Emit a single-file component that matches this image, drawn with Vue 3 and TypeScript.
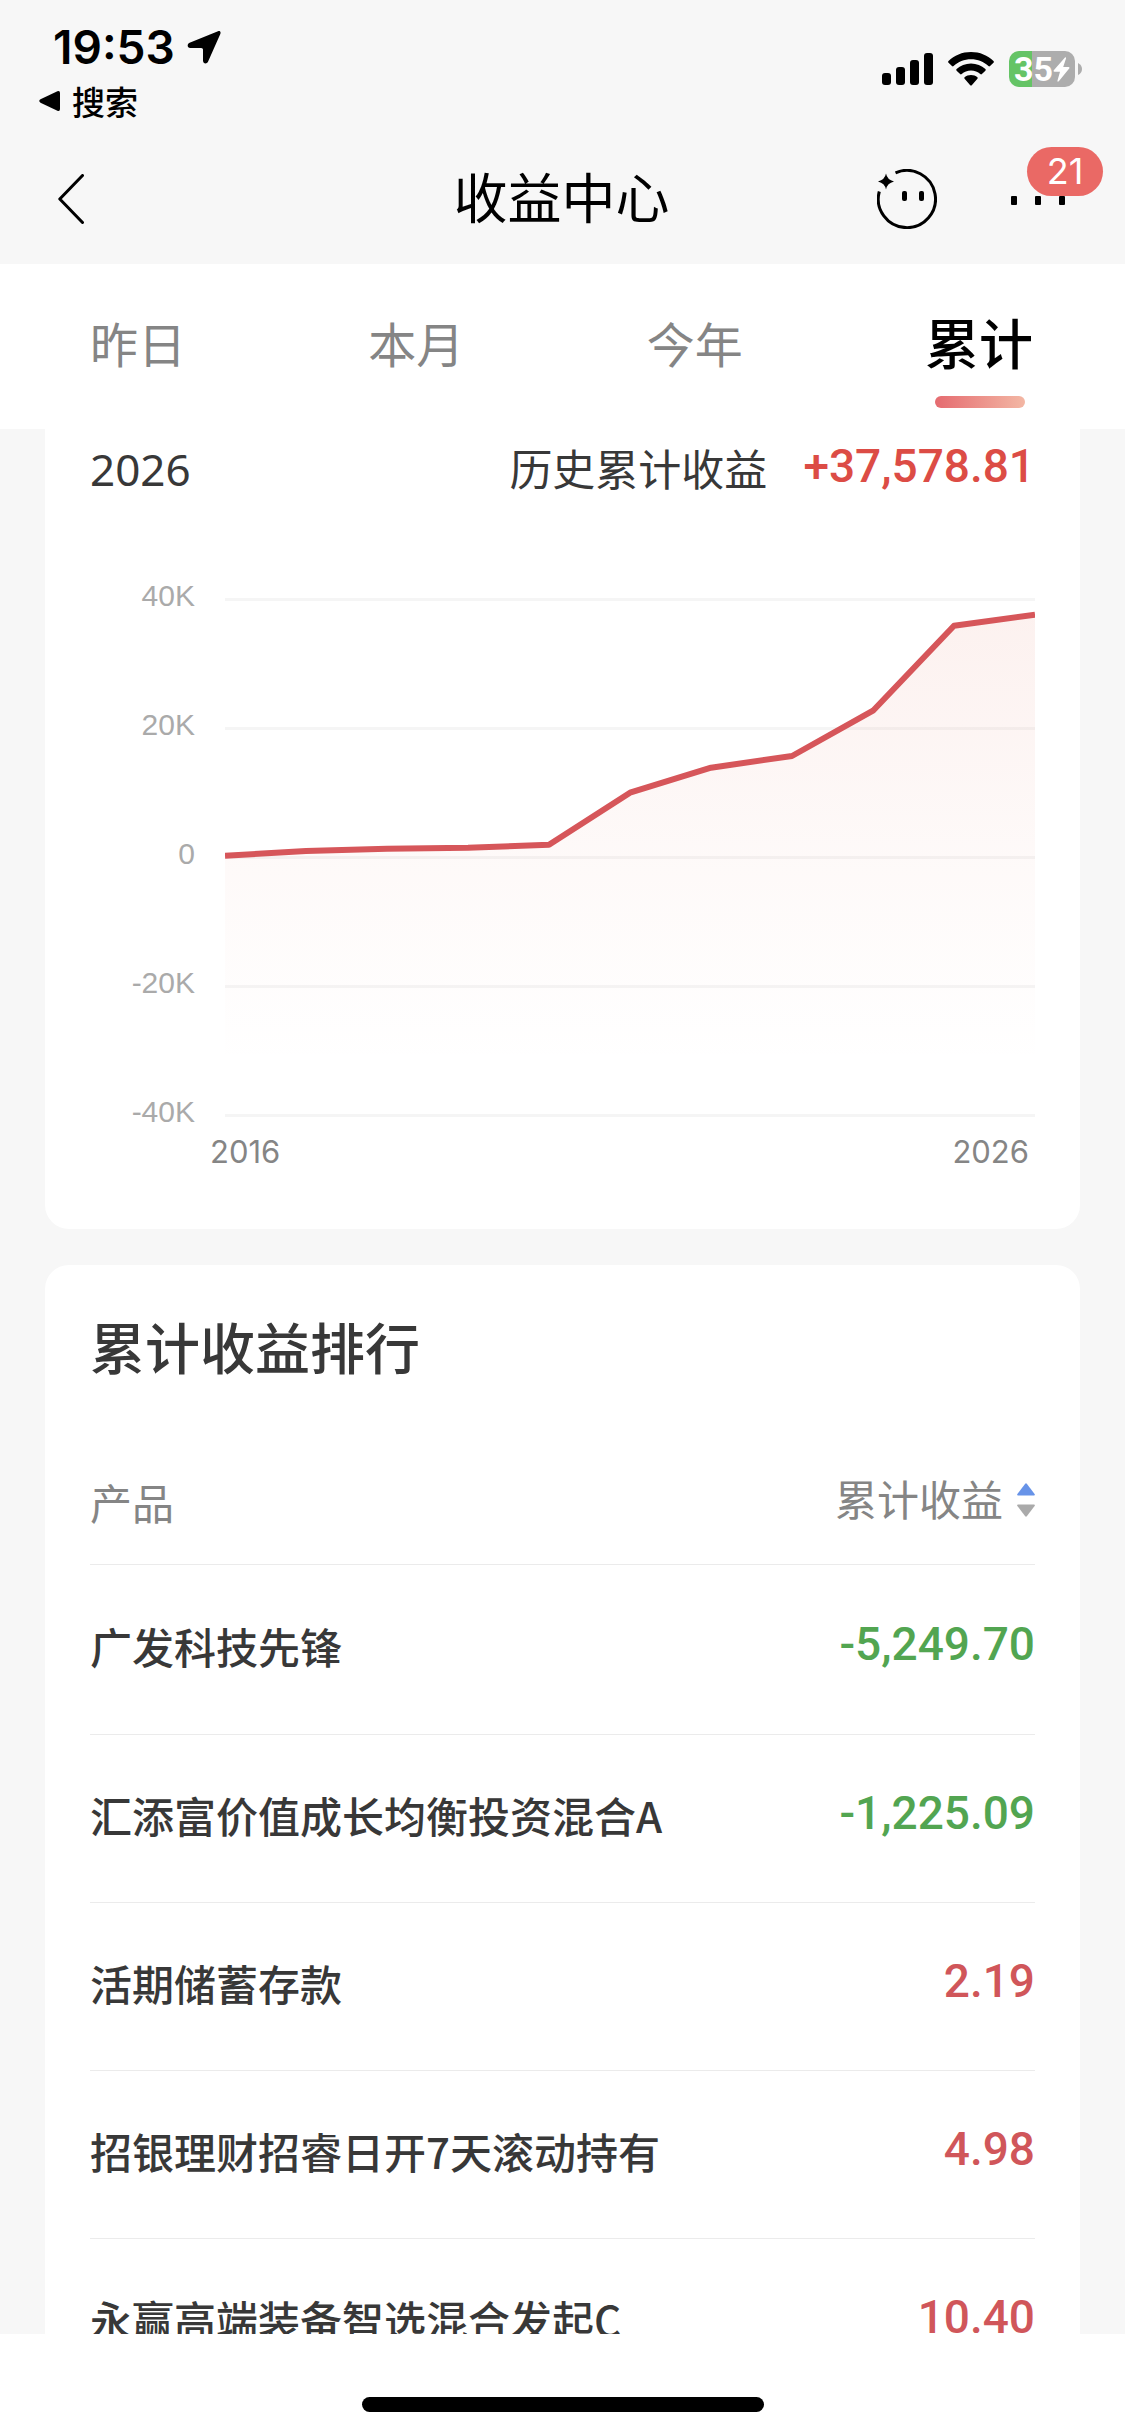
<script setup lang="ts">
import { computed, ref } from 'vue'

interface Product {
  name: string
  earnings: number
}

const tabs = ['昨日', '本月', '今年', '累计']
const activeTab = ref('累计')

const total = 37578.81
const history = [200, 930, 1290, 1440, 1900, 9970, 13840, 15660, 22680, 35860, total]
const axisLabels = ['40K', '20K', '0', '-20K', '-40K']

const products: Product[] = [
  { name: '广发科技先锋', earnings: -5249.7 },
  { name: '汇添富价值成长均衡投资混合A', earnings: -1225.09 },
  { name: '活期储蓄存款', earnings: 2.19 },
  { name: '招银理财招睿日开7天滚动持有', earnings: 4.98 },
  { name: '永赢高端装备智选混合发起C', earnings: 10.4 },
]

const ascending = ref(true)
const ranked = computed(() =>
  [...products].sort((a, b) => (ascending.value ? a.earnings - b.earnings : b.earnings - a.earnings)),
)

// Plot area: 810 x 519 units, 129 units for each 20K step, zero on the middle grid line.
const gridY = [0, 1, 2, 3, 4].map((i) => i * 129 + 1.5)
const points = history.map((v, i) => `${i * 81},${(259 - (v / 20000) * 129).toFixed(1)}`)
const linePath = 'M' + points.join(' L')
const areaPath = linePath + ' L810,517 L0,517 Z'

function money(value: number): string {
  return value.toLocaleString('en-US', { minimumFractionDigits: 2, maximumFractionDigits: 2 })
}
</script>

<template>
  <div class="screen" lang="zh-CN">
    <header class="top">
      <div class="status">
        <div class="status-left">
          <div class="clock">
            <span>19:53</span>
            <svg class="location" viewBox="0 0 34 34" aria-hidden="true">
              <path d="M31 1.200L2.600 12.800C-.300 14 .200 18 3.200 18H14.200C15.300 18 16 18.700 16 19.800V30.500C16 33.800 19.600 34.500 21 31.800L33.200 4.200C34.200 2 33 .400 31 1.200Z" />
            </svg>
          </div>
          <a class="return" href="#">
            <svg viewBox="0 0 22 22" aria-hidden="true"><path d="M1.500 9.300L18.400 1.200Q21 .200 21 3V19Q21 21.800 18.400 20.800L1.500 12.700Q-1 11 1.500 9.300Z" /></svg>
            <span>搜索</span>
          </a>
        </div>
        <div class="status-right">
          <svg class="signal" viewBox="0 0 51 32" aria-hidden="true">
            <rect x="0" y="20" width="9" height="12" rx="3" />
            <rect x="14" y="14" width="9" height="18" rx="3" />
            <rect x="28" y="7" width="9" height="25" rx="3" />
            <rect x="42" y="0" width="9" height="32" rx="3" />
          </svg>
          <svg class="wifi" viewBox="0 0 46 34" aria-hidden="true">
            <path d="M23 0C14.200 0 6.200 3.400 .500 8.900Q-.300 9.800 .500 10.700L4 14.100Q4.800 14.800 5.600 14.100C10.100 9.800 16.300 7.200 23 7.200S35.900 9.800 40.400 14.100Q41.200 14.800 42 14.100L45.500 10.700Q46.300 9.800 45.500 8.900C39.800 3.400 31.800 0 23 0Z" />
            <path d="M23 11.500C17.400 11.500 12.400 13.600 8.600 17.100Q7.800 17.900 8.600 18.700L12.100 22.100Q12.900 22.800 13.700 22.100C16.200 19.900 19.400 18.600 23 18.600S29.800 19.900 32.300 22.100Q33.100 22.800 33.900 22.100L37.400 18.700Q38.200 17.900 37.400 17.100C33.600 13.600 28.600 11.500 23 11.500Z" />
            <path d="M23 23C20.500 23 18.300 23.800 16.600 25.200Q15.800 26 16.600 26.800L22 32.900Q23 34 24 32.900L29.400 26.800Q30.200 26 29.400 25.200C27.700 23.800 25.500 23 23 23Z" />
          </svg>
          <div class="battery">
            <div class="battery-body">
              <span>35</span>
              <svg viewBox="0 0 17 25" aria-hidden="true"><path d="M12 .600L.800 13.200Q0 14.600 1.500 14.800H7L4.500 23.600Q4.300 25.400 5.800 24.200L16.200 11.600Q17 10.200 15.500 10H10.200L13 1.500Q13.200 -.500 12 .600Z" /></svg>
            </div>
            <svg class="battery-cap" viewBox="0 0 4 12" aria-hidden="true"><path d="M0 0Q4 2 4 6T0 12Z" /></svg>
          </div>
        </div>
      </div>
      <nav class="navbar">
        <button class="back" type="button" aria-label="返回">
          <svg viewBox="0 0 26 50" aria-hidden="true"><path d="M24.500 1.500L1.800 25L24.500 48.500" /></svg>
        </button>
        <h1>收益中心</h1>
        <div class="actions">
          <button class="assistant" type="button" aria-label="助手">
            <svg viewBox="0 0 60 60" aria-hidden="true">
              <path class="ring" d="M18.500 3.800A28.600 28.600 0 1 1 2.300 22.500" />
              <path d="M9 4.500Q10.200 10.800 17 12.500Q10.200 14.200 9 20.500Q7.800 14.200 1 12.500Q7.800 10.800 9 4.500Z" />
              <rect x="25" y="22" width="5" height="10" rx="2" />
              <rect x="42" y="22" width="5" height="10" rx="2" />
            </svg>
          </button>
          <button class="more" type="button" aria-label="更多">
            <svg viewBox="0 0 54 9" aria-hidden="true">
              <rect width="6" height="9" rx="1" />
              <rect x="24" width="6" height="9" rx="1" />
              <rect x="48" width="6" height="9" rx="1" />
            </svg>
            <span class="badge">21</span>
          </button>
        </div>
      </nav>
    </header>

    <div class="tabs" role="tablist">
      <button
        v-for="tab in tabs"
        :key="tab"
        type="button"
        role="tab"
        :aria-selected="tab === activeTab"
        :class="['tab', { active: tab === activeTab }]"
        @click="activeTab = tab"
      >
        {{ tab }}
      </button>
    </div>

    <main class="content">
      <section class="card trend">
        <div class="summary">
          <span class="year">2026</span>
          <span class="label">历史累计收益</span>
          <strong class="amount total">+{{ money(total) }}</strong>
        </div>
        <div class="chart">
          <div class="axis-y">
            <span v-for="label in axisLabels" :key="label">{{ label }}</span>
          </div>
          <svg class="plot" viewBox="0 0 810 519" preserveAspectRatio="none" role="img" aria-label="历史累计收益">
            <defs>
              <linearGradient id="area-fill" x1="0" y1="0" x2="0" y2="1">
                <stop offset="0" stop-color="#e0664f" stop-opacity="0.09" />
                <stop offset="0.5" stop-color="#e0664f" stop-opacity="0.035" />
                <stop offset="0.9" stop-color="#e0664f" stop-opacity="0" />
              </linearGradient>
            </defs>
            <line v-for="y in gridY" :key="y" class="grid" x1="0" x2="810" :y1="y" :y2="y" />
            <path :d="areaPath" fill="url(#area-fill)" />
            <path class="line" :d="linePath" />
          </svg>
        </div>
        <div class="axis-x"><span>2016</span><span>2026</span></div>
      </section>

      <section class="card ranking">
        <h2>累计收益排行</h2>
        <table>
          <thead>
            <tr>
              <th scope="col">产品</th>
              <th scope="col" class="right">
                <button class="sort" type="button" @click="ascending = !ascending">
                  <span>累计收益</span>
                  <svg viewBox="0 0 18 34" aria-hidden="true">
                    <path :class="{ on: ascending }" d="M8 .900Q9 -.300 10 .900L17.600 11Q18.300 12.500 17 12.500H1Q-.300 12.500 .400 11Z" />
                    <path :class="{ on: !ascending }" d="M8 33.100Q9 34.300 10 33.100L17.600 23Q18.300 21.500 17 21.500H1Q-.300 21.500 .400 23Z" />
                  </svg>
                </button>
              </th>
            </tr>
          </thead>
          <tbody>
            <tr v-for="item in ranked" :key="item.name">
              <td class="name">{{ item.name }}</td>
              <td :class="['amount', 'right', item.earnings < 0 ? 'loss' : 'gain']">{{ money(item.earnings) }}</td>
            </tr>
          </tbody>
        </table>
      </section>
    </main>

    <footer class="bottom"><div class="home-indicator"></div></footer>
  </div>
</template>

<style>
body {
  margin: 0;
  background: #fff;
}
</style>

<style scoped>
.screen {
  display: flex;
  flex-direction: column;
  height: 100vh;
  background: #f7f7f7;
  color: #383838;
  font-family: "Noto Sans CJK SC", "Noto Sans", sans-serif;
  font-size: 42px;
}

button {
  padding: 0;
  border: 0;
  background: none;
  color: inherit;
  font: inherit;
  cursor: pointer;
}

svg {
  display: block;
  flex: none;
}

.top {
  flex: none;
  color: #000;
}

.status {
  display: flex;
  justify-content: space-between;
  height: 130px;
  box-sizing: border-box;
  padding: 20px 43px 0 39px;
}

.clock {
  display: flex;
  align-items: center;
  gap: 12px;
  padding-left: 14px;
  font: 600 46px/54px Inter, sans-serif;
}

.location {
  width: 34px;
  height: 34px;
}

.return {
  display: flex;
  align-items: center;
  gap: 11px;
  color: inherit;
  font-size: 33px;
  font-weight: 500;
  line-height: 54px;
  text-decoration: none;
}

.return svg {
  width: 22px;
  height: 22px;
}

.status-right {
  display: flex;
  align-items: center;
  height: 98px;
}

.signal {
  width: 51px;
  height: 32px;
}

.wifi {
  width: 46px;
  height: 34px;
  margin: 0 15px;
}

.battery {
  display: flex;
  align-items: center;
  gap: 3px;
}

.battery-body {
  display: flex;
  align-items: center;
  justify-content: center;
  width: 66px;
  height: 36px;
  border-radius: 10px;
  background: linear-gradient(90deg, #65c466 35%, #adadad 35%);
  color: #fff;
  font: 700 34px/36px Roboto, sans-serif;
}

.battery-body svg {
  width: 17px;
  height: 25px;
  fill: #fff;
}

.battery-cap {
  width: 4px;
  height: 12px;
  fill: #adadad;
}

.navbar {
  display: grid;
  grid-template-columns: 1fr auto 1fr;
  align-items: center;
  height: 134px;
  box-sizing: border-box;
  padding: 3px 60px 0 58px;
}

.back {
  justify-self: start;
}

.back svg {
  width: 26px;
  height: 50px;
  fill: none;
  stroke: #000;
  stroke-width: 3;
  stroke-linecap: round;
  stroke-linejoin: round;
}

h1 {
  margin: 0;
  padding-bottom: 6px;
  font-size: 54px;
  font-weight: 400;
  line-height: 80px;
}

.actions {
  display: flex;
  align-items: center;
  justify-self: end;
  gap: 74px;
}

.assistant svg {
  width: 60px;
  height: 60px;
}

.ring {
  fill: none;
  stroke: #000;
  stroke-width: 3;
}

.more {
  position: relative;
  padding: 20px 0 16px;
}

.more svg {
  width: 54px;
  height: 9px;
}

.badge {
  position: absolute;
  top: -29px;
  right: -38px;
  width: 76px;
  border-radius: 25px;
  background: #ea6965;
  color: #fff;
  font: 400 36px/49px Inter, sans-serif;
}

.tabs {
  display: flex;
  flex: none;
  justify-content: space-between;
  height: 165px;
  padding: 0 92px 0 90px;
  background: #fff;
}

.tab {
  position: relative;
  padding-bottom: 10px;
  color: #858585;
  font-size: 48px;
}

.tab.active {
  color: #000;
  font-size: 54px;
  font-weight: 500;
}

.tab.active::after {
  position: absolute;
  bottom: 21px;
  left: 50%;
  width: 90px;
  height: 12px;
  margin-left: -44px;
  border-radius: 6px;
  background: linear-gradient(90deg, #e56b70, #f3b7a4);
  content: "";
}

.content {
  flex: 1 1 0;
  min-height: 0;
  overflow: hidden;
  padding: 0 45px;
}

.card {
  padding: 0 45px;
  border-radius: 24px;
  background: #fff;
}

.trend {
  padding-bottom: 59px;
  border-top-left-radius: 0;
  border-top-right-radius: 0;
}

.summary {
  display: flex;
  align-items: center;
  height: 84px;
}

.year {
  flex: 1;
  padding-bottom: 4px;
  font-family: "Noto Sans", sans-serif;
  font-size: 44px;
}

.label {
  margin-right: 36px;
  padding-bottom: 8px;
  font-size: 43px;
}

.amount {
  padding: 0 0 11px;
  font-family: Roboto, sans-serif;
  font-size: 46px;
  font-weight: 500;
}

.total {
  color: #dc4c45;
}

.gain {
  color: #d0565a;
}

.loss {
  color: #52a551;
}

.chart {
  display: grid;
  grid-template-columns: 135px 1fr;
  margin-top: 65px;
}

.axis-y {
  display: flex;
  flex-direction: column;
  justify-content: space-between;
  height: 552px;
  padding-right: 30px;
  color: #aaa;
  font: 400 30px/36px "Liberation Sans", sans-serif;
  text-align: right;
}

.plot {
  width: 100%;
  height: 519px;
  margin-top: 20px;
  overflow: hidden;
}

.grid {
  stroke: #f5f5f5;
  stroke-width: 3;
}

.line {
  fill: none;
  stroke: #d6565a;
  stroke-width: 6;
  stroke-linejoin: round;
}

.axis-x {
  display: flex;
  justify-content: space-between;
  margin-top: 4px;
  padding: 0 6px 0 120px;
  color: #858585;
  font: 400 31px/36px Inter, sans-serif;
}

.ranking {
  margin-top: 36px;
  padding-bottom: 45px;
}

h2 {
  margin: 0;
  padding: 40px 0 2px;
  font-size: 55px;
  font-weight: 500;
  line-height: 80px;
}

table {
  width: 100%;
  margin-top: 58px;
  border-collapse: separate;
  border-spacing: 0;
}

th,
td {
  height: 168px;
  box-sizing: border-box;
  border-bottom: 1px solid #ebebeb;
  text-align: left;
}

tbody tr:first-child td {
  height: 170px;
}

th {
  height: 120px;
  padding: 0 0 6px;
  color: #858585;
  font-size: 42px;
  font-weight: 400;
}

.name {
  padding: 0 0 8px;
  font-weight: 500;
}

.right {
  text-align: right;
}

.sort {
  display: inline-flex;
  align-items: center;
  gap: 14px;
  padding-bottom: 8px;
}

.sort svg {
  width: 18px;
  height: 34px;
  margin-top: 4px;
  fill: #aaa;
}

.sort .on {
  fill: #6793e8;
}

.bottom {
  display: flex;
  flex: none;
  align-items: flex-end;
  justify-content: center;
  height: 102px;
  box-sizing: border-box;
  padding-bottom: 24px;
  background: #fff;
}

.home-indicator {
  width: 402px;
  height: 15px;
  border-radius: 8px;
  background: #000;
}
</style>
